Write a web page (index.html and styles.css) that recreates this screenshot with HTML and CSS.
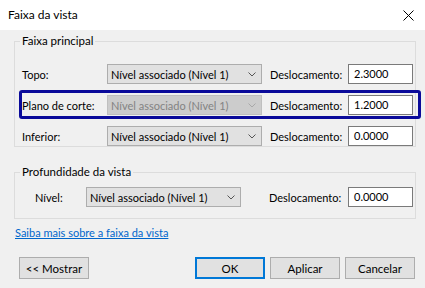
FILE: index.html
```html
<!DOCTYPE html>
<html lang="pt">
<head>
    <meta charset="UTF-8">
    <title>Faixa da vista</title>
    <link rel="stylesheet" href="styles.css">
</head>
<body>
    <div class="titlebar">
        <span class="title">Faixa da vista</span>
        <svg class="close" width="11" height="11" viewBox="0 0 11 11">
            <path d="M0.5 0.5 L10.5 10.5 M10.5 0.5 L0.5 10.5" stroke="#000" stroke-width="1" fill="none"/>
        </svg>
    </div>

    <div class="content">
        <fieldset class="group">
            <legend>Faixa principal</legend>
            <div class="rows">
                <div class="row">
                    <span class="label">Topo:</span>
                    <div class="combo">
                        <span>Nível associado (Nível 1)</span>
                        <svg width="8" height="5" viewBox="0 0 8 5"><polyline points="0.5,0.5 4,4 7.5,0.5" fill="none" stroke="#555" stroke-width="1"/></svg>
                    </div>
                    <span class="offset-label">Deslocamento:</span>
                    <div class="field">2.3000</div>
                </div>
                <div class="row highlighted">
                    <span class="label">Plano de corte:</span>
                    <div class="combo disabled">
                        <span>Nível associado (Nível 1)</span>
                        <svg width="8" height="5" viewBox="0 0 8 5"><polyline points="0.5,0.5 4,4 7.5,0.5" fill="none" stroke="#a8a8a8" stroke-width="1"/></svg>
                    </div>
                    <span class="offset-label">Deslocamento:</span>
                    <div class="field">1.2000</div>
                </div>
                <div class="row">
                    <span class="label">Inferior:</span>
                    <div class="combo">
                        <span>Nível associado (Nível 1)</span>
                        <svg width="8" height="5" viewBox="0 0 8 5"><polyline points="0.5,0.5 4,4 7.5,0.5" fill="none" stroke="#555" stroke-width="1"/></svg>
                    </div>
                    <span class="offset-label">Deslocamento:</span>
                    <div class="field">0.0000</div>
                </div>
            </div>
        </fieldset>

        <fieldset class="group depth">
            <legend>Profundidade da vista</legend>
            <div class="rows">
                <div class="row">
                    <span class="label">Nível:</span>
                    <div class="combo">
                        <span>Nível associado (Nível 1)</span>
                        <svg width="8" height="5" viewBox="0 0 8 5"><polyline points="0.5,0.5 4,4 7.5,0.5" fill="none" stroke="#555" stroke-width="1"/></svg>
                    </div>
                    <span class="offset-label">Deslocamento:</span>
                    <div class="field">0.0000</div>
                </div>
            </div>
        </fieldset>

        <a class="link" href="#">Saiba mais sobre a faixa da vista</a>

        <div class="buttons">
            <button>&lt;&lt; Mostrar</button>
            <span class="spacer"></span>
            <button class="primary">OK</button>
            <button>Aplicar</button>
            <button>Cancelar</button>
        </div>
    </div>
</body>
</html>
```

FILE: styles.css
```css
body {
    margin: 0;
    font-family: Lato, 'Liberation Sans', sans-serif;
    font-size: 11px;
    color: #000;
    background: #f0f0f0;
}
.titlebar {
    height: 30px;
    background: #fff;
    display: flex;
    align-items: center;
    justify-content: space-between;
    padding: 0 11px 0 8px;
}
.title { line-height: 14px; font-size: 12px; }
.close { display: block; }

.content {
    padding: 4px 9px 0 14px;
}
.group {
    margin: 0;
    padding: 0 2px 0 5px;
    border: 1px solid #dcdcdc;
    min-width: 0;
}
.group legend {
    padding: 0 2px;
    line-height: 14px;
    font-size: 11.5px;
}
.rows {
    display: flex;
    flex-direction: column;
    gap: 11px;
    padding: 16px 0 0 2px;
}
.row {
    display: grid;
    grid-template-columns: 85px 155px 86px 65px;
    align-items: center;
    height: 20px;
}
.offset-label { padding-left: 8px; }

.combo {
    height: 20px;
    box-sizing: border-box;
    border: 1px solid #adadad;
    background: #e1e1e1;
    display: flex;
    align-items: center;
    justify-content: space-between;
    padding: 0 5px 0 3px;
}
.combo svg { display: block; }
.combo.disabled {
    background: #cccccc;
    border-color: #bfbfbf;
    color: #838383;
}
.field {
    height: 20px;
    box-sizing: border-box;
    border: 1px solid #7a7a7a;
    background: #fff;
    padding: 0 5px;
    line-height: 18px;
}

.highlighted { position: relative; }
.highlighted::after {
    content: "";
    position: absolute;
    left: -3px;
    right: -8px;
    top: -5px;
    bottom: -4px;
    border: 3px solid #0a0a9a;
    border-radius: 3px;
}

.depth { margin-top: 18px; }
.depth .rows { padding: 8px 0 11px 15px; }
.depth .row { grid-template-columns: 51px 155px 107px 65px; }
.depth .offset-label { padding-left: 28px; }

.link {
    display: block;
    margin: 7px 0 0 1px;
    line-height: 14px;
    color: #0066cc;
    width: max-content;
}

.buttons {
    display: flex;
    gap: 5px;
    margin: 17px 1px 0 5px;
}
.spacer { flex: 1; }
.buttons button {
    width: 70px;
    height: 22px;
    box-sizing: border-box;
    border: 1px solid #adadad;
    background: #e1e1e1;
    font-family: inherit;
    font-size: 11.5px;
    color: #000;
    padding: 0;
}
.buttons .primary { border: 2px solid #0078d7; }
```
